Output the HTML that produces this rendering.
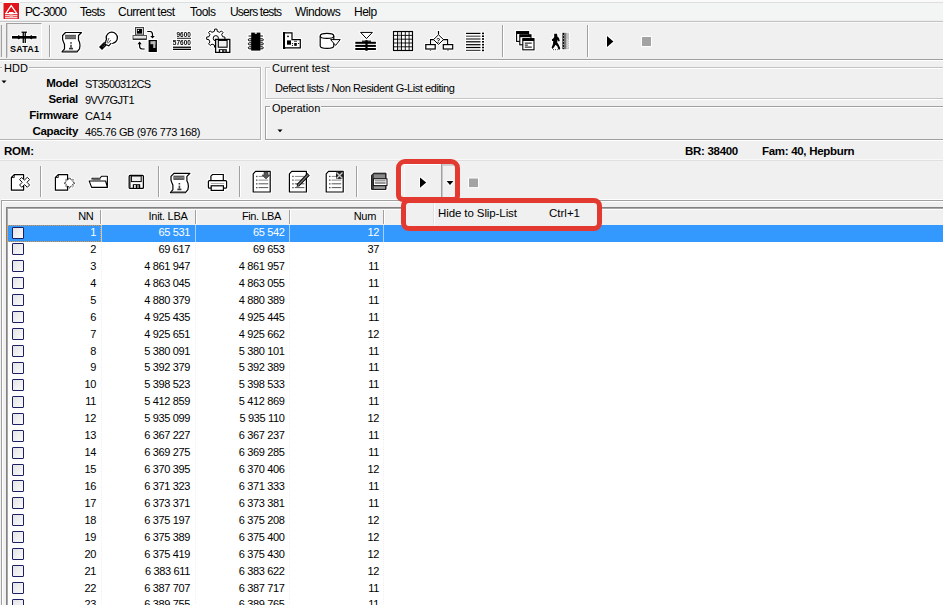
<!DOCTYPE html>
<html><head><meta charset="utf-8">
<style>
*{margin:0;padding:0;box-sizing:border-box}
html,body{width:943px;height:605px;overflow:hidden;background:#f0f0f0;font-family:"Liberation Sans",sans-serif;color:#000}
.a{position:absolute}
.t{position:absolute;white-space:nowrap;line-height:1}
.hl{position:absolute;height:1px}
.vl{position:absolute;width:1px}
.c{position:absolute;top:0;white-space:nowrap;letter-spacing:-0.35px}
.cb{position:absolute;left:12px;top:2.5px;width:12px;height:12px;border:1.5px solid #1b1f63;border-radius:1px;background:linear-gradient(135deg,#e4e4e4,#fafafa)}
</style></head><body>
<!-- menu bar -->
<div class="a" style="left:0;top:0;width:943px;height:21px;background:#f3f5f4"></div>
<div class="hl" style="left:0;top:0;width:943px;height:2px;background:#fafafa"></div>
<div class="hl" style="left:0;top:2px;width:943px;background:#dddfde"></div>
<div class="hl" style="left:0;top:20px;width:943px;background:#eceeee"></div>
<div class="hl" style="left:0;top:21px;width:943px;background:#c4c4c4"></div>
<div class="hl" style="left:0;top:22px;width:943px;background:#f8f8f8"></div>
<div id="menu">
<span class="t" style="left:25px;top:6px;font-size:12px;letter-spacing:-0.9px">PC-3000</span>
<span class="t" style="left:80px;top:6px;font-size:12px;letter-spacing:-0.7px">Tests</span>
<span class="t" style="left:118px;top:6px;font-size:12px;letter-spacing:-0.5px">Current test</span>
<span class="t" style="left:190px;top:6px;font-size:12px;letter-spacing:-0.5px">Tools</span>
<span class="t" style="left:230px;top:6px;font-size:12px;letter-spacing:-0.8px">Users tests</span>
<span class="t" style="left:295px;top:6px;font-size:12px;letter-spacing:-0.5px">Windows</span>
<span class="t" style="left:354px;top:6px;font-size:12px;letter-spacing:-0.5px">Help</span>
</div>
<!-- toolbar1 -->
<div class="vl" style="left:0;top:25px;height:32px;background:#e3e3e3"></div>
<div class="vl" style="left:1px;top:25px;height:32px;background:#a0a0a0"></div>
<div class="a" style="left:6px;top:23px;width:36px;height:35px;border-left:1px solid #a0a0a0;border-top:1px solid #a0a0a0;border-right:1px solid #fff;background:#f0f0f0"></div>
<div class="vl" style="left:7px;top:24px;height:33px;background:#d4d4d4"></div>
<div class="vl" style="left:49px;top:25px;height:32px;background:#a0a0a0"></div>
<div class="vl" style="left:50px;top:25px;height:32px;background:#fff"></div>
<div class="vl" style="left:502px;top:25px;height:32px;background:#a0a0a0"></div>
<div class="vl" style="left:503px;top:25px;height:32px;background:#fff"></div>
<div class="vl" style="left:587px;top:25px;height:32px;background:#a0a0a0"></div>
<div class="vl" style="left:588px;top:25px;height:32px;background:#fff"></div>
<span class="t" style="left:10px;top:45px;font-size:9px;font-weight:bold;letter-spacing:0.2px">SATA1</span>
<!-- toolbar 1 bottom -->
<div class="hl" style="left:0;top:59px;width:943px;background:#a0a0a0"></div>
<div class="hl" style="left:0;top:60px;width:943px;background:#ffffff"></div>

<!-- HDD group -->
<div class="a" style="left:0;top:67px;width:261px;height:1px;background:#b4b4b4"></div>
<div class="a" style="left:0;top:68px;width:260px;height:1px;background:#fff"></div>
<div class="a" style="left:260px;top:67px;width:1px;height:72px;background:#b4b4b4"></div>
<div class="a" style="left:261px;top:67px;width:1px;height:73px;background:#fff"></div>
<div class="a" style="left:0;top:139px;width:261px;height:1px;background:#b4b4b4"></div>
<div class="a" style="left:0;top:140px;width:262px;height:1px;background:#fff"></div>
<span class="t" style="left:2px;top:63px;font-size:11px;background:#f0f0f0;padding:0 1px 0 2px;height:10px">HDD</span>
<svg class="a" style="left:0;top:79px" width="8" height="6"><path d="M1.5,1.5 L6.5,1.5 L4,4.2Z" fill="#000"/></svg>
<div class="t" style="left:0;top:75px;width:78px;text-align:right;font-size:11.5px;font-weight:bold;letter-spacing:-0.3px;line-height:16px">
<div style="height:16px">Model</div><div style="height:16px">Serial</div><div style="height:16px">Firmware</div><div style="height:16px">Capacity</div></div>
<div class="t" style="left:85px;top:76px;font-size:11px;letter-spacing:-0.6px;line-height:16px">
<div style="height:16px">ST3500312CS</div><div style="height:16px">9VV7GJT1</div><div style="height:16px;letter-spacing:-0.3px">CA14</div><div style="height:16px;letter-spacing:-0.4px">465.76 GB (976 773 168)</div></div>

<div class="a" style="left:265px;top:67px;width:678px;height:1px;background:#c4c4c4"></div>
<div class="a" style="left:266px;top:68px;width:677px;height:1px;background:#fff"></div>
<div class="a" style="left:265px;top:67px;width:1px;height:32px;background:#c4c4c4"></div>
<div class="a" style="left:266px;top:68px;width:1px;height:31px;background:#fff"></div>
<div class="a" style="left:265px;top:98px;width:678px;height:1px;background:#c4c4c4"></div>
<div class="a" style="left:265px;top:99px;width:678px;height:1px;background:#fff"></div>
<span class="t" style="left:270px;top:63px;font-size:11px;background:#f0f0f0;padding:0 1px 0 2px;height:10px">Current test</span>
<span class="t" style="left:275px;top:83px;font-size:11px;letter-spacing:-0.43px">Defect lists / Non Resident G-List editing</span>

<div class="a" style="left:265px;top:106px;width:678px;height:1px;background:#a0a0a0"></div>
<div class="a" style="left:266px;top:107px;width:677px;height:1px;background:#fff"></div>
<div class="a" style="left:265px;top:106px;width:1px;height:33px;background:#a0a0a0"></div>
<div class="a" style="left:266px;top:107px;width:1px;height:32px;background:#fff"></div>
<div class="a" style="left:265px;top:139px;width:678px;height:1px;background:#a0a0a0"></div>
<div class="a" style="left:265px;top:140px;width:678px;height:1px;background:#fff"></div>
<span class="t" style="left:270px;top:103px;font-size:11px;background:#f0f0f0;padding:0 1px 0 2px;height:10px">Operation</span>
<svg class="a" style="left:276px;top:128px" width="8" height="6"><path d="M1.5,1.5 L6.5,1.5 L4,4.2Z" fill="#000"/></svg>

<span class="t" style="left:4px;top:146px;font-size:11.5px;font-weight:bold;letter-spacing:-0.2px">ROM:</span>
<span class="t" style="left:685px;top:146px;font-size:11.5px;font-weight:bold;letter-spacing:-0.3px">BR: 38400</span>
<span class="t" style="left:762px;top:146px;font-size:11.5px;font-weight:bold;letter-spacing:-0.3px">Fam: 40, Hepburn</span>
<!-- ROM row -->
<div class="hl" style="left:0;top:160px;width:943px;background:#dcdcdc"></div>

<!-- toolbar2 -->
<div class="hl" style="left:0;top:159px;width:943px;background:#f8f8f8"></div>
<div class="hl" style="left:0;top:160px;width:943px;background:#e0e0e0"></div>
<div class="vl" style="left:40px;top:166px;height:31px;background:#a0a0a0"></div>
<div class="vl" style="left:41px;top:166px;height:31px;background:#fff"></div>
<div class="vl" style="left:158px;top:166px;height:31px;background:#a0a0a0"></div>
<div class="vl" style="left:159px;top:166px;height:31px;background:#fff"></div>
<div class="vl" style="left:239px;top:166px;height:31px;background:#a0a0a0"></div>
<div class="vl" style="left:240px;top:166px;height:31px;background:#fff"></div>
<div class="vl" style="left:356px;top:166px;height:31px;background:#a0a0a0"></div>
<div class="vl" style="left:357px;top:166px;height:31px;background:#fff"></div>
<!-- dropdown button -->
<div class="a" style="left:401px;top:164px;width:54px;height:33px;background:#f0f0f0;border-left:1px solid #fff;border-top:1px solid #fff"></div>
<div class="vl" style="left:404px;top:165px;height:32px;background:#f8f8f8"></div>
<div class="vl" style="left:441px;top:164px;height:33px;background:#a0a0a0"></div>
<div class="vl" style="left:442px;top:164px;height:33px;background:#c8c8c8"></div>
<div class="a" style="left:443px;top:164px;width:12px;height:2px;background:#d0d0d0"></div>
<!-- grid -->
<div class="a" style="left:1px;top:199px;width:942px;height:1px;background:#fff"></div>
<div class="a" style="left:1px;top:200px;width:942px;height:1px;background:#a0a0a0"></div>
<div class="a" style="left:1px;top:200px;width:1px;height:405px;background:#a0a0a0"></div>
<div class="a" style="left:2px;top:201px;width:941px;height:1px;background:#fff"></div>
<div class="a" style="left:2px;top:201px;width:1px;height:404px;background:#fff"></div>
<div class="a" style="left:6px;top:207px;width:937px;height:398px;background:#fff"></div>
<div class="a" style="left:6px;top:207px;width:937px;height:1px;background:#828282"></div>
<div class="a" style="left:6px;top:207px;width:1px;height:398px;background:#828282"></div>
<div class="a" style="left:7px;top:208px;width:936px;height:1px;background:#a8a8a8"></div>
<div class="a" style="left:7px;top:208px;width:1px;height:397px;background:#a8a8a8"></div>
<div class="a" style="left:8px;top:209px;width:935px;height:16px;background:#f0f0f0;border-top:1px solid #fff"></div>
<div class="a" style="left:100px;top:210px;width:1px;height:14px;background:#a0a0a0"></div>
<div class="a" style="left:101px;top:210px;width:1px;height:14px;background:#fff"></div>
<div class="a" style="left:195px;top:210px;width:1px;height:14px;background:#a0a0a0"></div>
<div class="a" style="left:196px;top:210px;width:1px;height:14px;background:#fff"></div>
<div class="a" style="left:289px;top:210px;width:1px;height:14px;background:#a0a0a0"></div>
<div class="a" style="left:290px;top:210px;width:1px;height:14px;background:#fff"></div>
<div class="a" style="left:383px;top:210px;width:1px;height:14px;background:#a0a0a0"></div>
<div class="a" style="left:384px;top:210px;width:1px;height:14px;background:#fff"></div>
<span class="t" style="left:-26.5px;top:208px;width:120px;text-align:right;font-size:11px;line-height:17px;letter-spacing:-0.3px">NN</span>
<span class="t" style="left:67.5px;top:208px;width:120px;text-align:right;font-size:11px;line-height:17px;letter-spacing:-0.3px">Init. LBA</span>
<span class="t" style="left:161px;top:208px;width:120px;text-align:right;font-size:11px;line-height:17px;letter-spacing:-0.4px">Fin. LBA</span>
<span class="t" style="left:256px;top:208px;width:120px;text-align:right;font-size:11px;line-height:17px;letter-spacing:-0.3px">Num</span>
<div class="a" style="left:101px;top:241px;width:1px;height:364px;background:repeating-linear-gradient(#f0f0f0 0 1px,#fff 1px 2px)"></div>
<div class="a" style="left:195px;top:241px;width:1px;height:364px;background:repeating-linear-gradient(#f0f0f0 0 1px,#fff 1px 2px)"></div>
<div class="a" style="left:289px;top:241px;width:1px;height:364px;background:repeating-linear-gradient(#f0f0f0 0 1px,#fff 1px 2px)"></div>
<div class="a" style="left:383px;top:241px;width:1px;height:364px;background:repeating-linear-gradient(#f0f0f0 0 1px,#fff 1px 2px)"></div>
<div class="a" style="left:8px;top:225px;width:935px;height:17px;background:#3399ff"></div>
<div class="a" style="left:101px;top:225px;width:1px;height:17px;background:#a6d0fb"></div>
<div class="a" style="left:195px;top:225px;width:1px;height:17px;background:#a6d0fb"></div>
<div class="a" style="left:289px;top:225px;width:1px;height:17px;background:#a6d0fb"></div>
<div class="a" style="left:383px;top:225px;width:1px;height:17px;background:#a6d0fb"></div>
<div class="a" style="left:7px;top:225px;width:94px;height:17px;border:1px dotted #f0932d"></div>
<div class="a" style="left:0;top:224.00px;width:400px;height:17px;color:#fff;font-size:11px;line-height:17px"><div class="cb"></div><span class="c" style="right:304px">1</span><span class="c" style="right:210px">65 531</span><span class="c" style="right:115.5px">65 542</span><span class="c" style="right:21px">12</span></div>
<div class="a" style="left:0;top:240.93px;width:400px;height:17px;color:#000;font-size:11px;line-height:17px"><div class="cb"></div><span class="c" style="right:304px">2</span><span class="c" style="right:210px">69 617</span><span class="c" style="right:115.5px">69 653</span><span class="c" style="right:21px">37</span></div>
<div class="a" style="left:0;top:257.86px;width:400px;height:17px;color:#000;font-size:11px;line-height:17px"><div class="cb"></div><span class="c" style="right:304px">3</span><span class="c" style="right:210px">4 861 947</span><span class="c" style="right:115.5px">4 861 957</span><span class="c" style="right:21px">11</span></div>
<div class="a" style="left:0;top:274.79px;width:400px;height:17px;color:#000;font-size:11px;line-height:17px"><div class="cb"></div><span class="c" style="right:304px">4</span><span class="c" style="right:210px">4 863 045</span><span class="c" style="right:115.5px">4 863 055</span><span class="c" style="right:21px">11</span></div>
<div class="a" style="left:0;top:291.72px;width:400px;height:17px;color:#000;font-size:11px;line-height:17px"><div class="cb"></div><span class="c" style="right:304px">5</span><span class="c" style="right:210px">4 880 379</span><span class="c" style="right:115.5px">4 880 389</span><span class="c" style="right:21px">11</span></div>
<div class="a" style="left:0;top:308.65px;width:400px;height:17px;color:#000;font-size:11px;line-height:17px"><div class="cb"></div><span class="c" style="right:304px">6</span><span class="c" style="right:210px">4 925 435</span><span class="c" style="right:115.5px">4 925 445</span><span class="c" style="right:21px">11</span></div>
<div class="a" style="left:0;top:325.58px;width:400px;height:17px;color:#000;font-size:11px;line-height:17px"><div class="cb"></div><span class="c" style="right:304px">7</span><span class="c" style="right:210px">4 925 651</span><span class="c" style="right:115.5px">4 925 662</span><span class="c" style="right:21px">12</span></div>
<div class="a" style="left:0;top:342.51px;width:400px;height:17px;color:#000;font-size:11px;line-height:17px"><div class="cb"></div><span class="c" style="right:304px">8</span><span class="c" style="right:210px">5 380 091</span><span class="c" style="right:115.5px">5 380 101</span><span class="c" style="right:21px">11</span></div>
<div class="a" style="left:0;top:359.44px;width:400px;height:17px;color:#000;font-size:11px;line-height:17px"><div class="cb"></div><span class="c" style="right:304px">9</span><span class="c" style="right:210px">5 392 379</span><span class="c" style="right:115.5px">5 392 389</span><span class="c" style="right:21px">11</span></div>
<div class="a" style="left:0;top:376.37px;width:400px;height:17px;color:#000;font-size:11px;line-height:17px"><div class="cb"></div><span class="c" style="right:304px">10</span><span class="c" style="right:210px">5 398 523</span><span class="c" style="right:115.5px">5 398 533</span><span class="c" style="right:21px">11</span></div>
<div class="a" style="left:0;top:393.30px;width:400px;height:17px;color:#000;font-size:11px;line-height:17px"><div class="cb"></div><span class="c" style="right:304px">11</span><span class="c" style="right:210px">5 412 859</span><span class="c" style="right:115.5px">5 412 869</span><span class="c" style="right:21px">11</span></div>
<div class="a" style="left:0;top:410.23px;width:400px;height:17px;color:#000;font-size:11px;line-height:17px"><div class="cb"></div><span class="c" style="right:304px">12</span><span class="c" style="right:210px">5 935 099</span><span class="c" style="right:115.5px">5 935 110</span><span class="c" style="right:21px">12</span></div>
<div class="a" style="left:0;top:427.16px;width:400px;height:17px;color:#000;font-size:11px;line-height:17px"><div class="cb"></div><span class="c" style="right:304px">13</span><span class="c" style="right:210px">6 367 227</span><span class="c" style="right:115.5px">6 367 237</span><span class="c" style="right:21px">11</span></div>
<div class="a" style="left:0;top:444.09px;width:400px;height:17px;color:#000;font-size:11px;line-height:17px"><div class="cb"></div><span class="c" style="right:304px">14</span><span class="c" style="right:210px">6 369 275</span><span class="c" style="right:115.5px">6 369 285</span><span class="c" style="right:21px">11</span></div>
<div class="a" style="left:0;top:461.02px;width:400px;height:17px;color:#000;font-size:11px;line-height:17px"><div class="cb"></div><span class="c" style="right:304px">15</span><span class="c" style="right:210px">6 370 395</span><span class="c" style="right:115.5px">6 370 406</span><span class="c" style="right:21px">12</span></div>
<div class="a" style="left:0;top:477.95px;width:400px;height:17px;color:#000;font-size:11px;line-height:17px"><div class="cb"></div><span class="c" style="right:304px">16</span><span class="c" style="right:210px">6 371 323</span><span class="c" style="right:115.5px">6 371 333</span><span class="c" style="right:21px">11</span></div>
<div class="a" style="left:0;top:494.88px;width:400px;height:17px;color:#000;font-size:11px;line-height:17px"><div class="cb"></div><span class="c" style="right:304px">17</span><span class="c" style="right:210px">6 373 371</span><span class="c" style="right:115.5px">6 373 381</span><span class="c" style="right:21px">11</span></div>
<div class="a" style="left:0;top:511.81px;width:400px;height:17px;color:#000;font-size:11px;line-height:17px"><div class="cb"></div><span class="c" style="right:304px">18</span><span class="c" style="right:210px">6 375 197</span><span class="c" style="right:115.5px">6 375 208</span><span class="c" style="right:21px">12</span></div>
<div class="a" style="left:0;top:528.74px;width:400px;height:17px;color:#000;font-size:11px;line-height:17px"><div class="cb"></div><span class="c" style="right:304px">19</span><span class="c" style="right:210px">6 375 389</span><span class="c" style="right:115.5px">6 375 400</span><span class="c" style="right:21px">12</span></div>
<div class="a" style="left:0;top:545.67px;width:400px;height:17px;color:#000;font-size:11px;line-height:17px"><div class="cb"></div><span class="c" style="right:304px">20</span><span class="c" style="right:210px">6 375 419</span><span class="c" style="right:115.5px">6 375 430</span><span class="c" style="right:21px">12</span></div>
<div class="a" style="left:0;top:562.60px;width:400px;height:17px;color:#000;font-size:11px;line-height:17px"><div class="cb"></div><span class="c" style="right:304px">21</span><span class="c" style="right:210px">6 383 611</span><span class="c" style="right:115.5px">6 383 622</span><span class="c" style="right:21px">12</span></div>
<div class="a" style="left:0;top:579.53px;width:400px;height:17px;color:#000;font-size:11px;line-height:17px"><div class="cb"></div><span class="c" style="right:304px">22</span><span class="c" style="right:210px">6 387 707</span><span class="c" style="right:115.5px">6 387 717</span><span class="c" style="right:21px">11</span></div>
<div class="a" style="left:0;top:596.46px;width:400px;height:17px;color:#000;font-size:11px;line-height:17px"><div class="cb"></div><span class="c" style="right:304px">23</span><span class="c" style="right:210px">6 389 755</span><span class="c" style="right:115.5px">6 389 765</span><span class="c" style="right:21px">11</span></div>
<svg class="a" style="left:0;top:0" width="943" height="605"><defs><filter id="halo" x="-5%" y="-5%" width="110%" height="110%" color-interpolation-filters="sRGB">
<feMorphology in="SourceAlpha" operator="dilate" radius="1" result="d"/>
<feFlood flood-color="#ffffff" flood-opacity="0.9"/>
<feComposite in2="d" operator="in" result="w"/>
<feGaussianBlur in="w" stdDeviation="0.35" result="wb"/>
<feMerge><feMergeNode in="wb"/><feMergeNode in="SourceGraphic"/></feMerge>
</filter></defs><g filter="url(#halo)">
<!-- logo -->
<rect x="3.5" y="3" width="15.5" height="16" fill="#e2141b"/>
<path d="M6,13.2 L11.2,5.6 L16.6,13.2" fill="none" stroke="#fff" stroke-width="1.3"/>
<rect x="5" y="13" width="12.5" height="1.2" fill="#fff"/>
<rect x="9" y="12" width="4.5" height="1.2" fill="#fff"/>
<rect x="5" y="15.2" width="12.5" height="1.1" fill="#fff"/>
<rect x="5" y="17.2" width="12.5" height="1.1" fill="#fff"/>
<rect x="9.5" y="14.4" width="3.5" height="3" fill="#f6b0b0"/>
<!-- SATA -->
<rect x="12" y="36" width="24.5" height="2.6" fill="#000"/>
<path d="M16.5,37.3 L18.8,35 L21,37.3 L18.8,39.6Z M29,37.3 L31.2,35 L33.5,37.3 L31.2,39.6Z" fill="#000"/>
<rect x="22.6" y="32" width="1.3" height="11" fill="#000"/>
<rect x="24.6" y="32" width="1.3" height="11" fill="#000"/>
<rect x="21.5" y="31.6" width="5.5" height="1.2" fill="#000"/>
<!-- scroll -->
<g id="scroll">
<path d="M65.5,32.5 L81.5,32.5 L78.5,35.5 L78.5,40 L79.6,42.5 L80,45.5 L79.5,48.8 L77,51.8 L62,51.8 L64.5,48.8 L64.5,44.5 L63.5,42 L62.6,39.5 L62.6,35.5 Z" fill="#fff" stroke="#000" stroke-width="1.2" stroke-linejoin="round"/>
<rect x="65" y="34.8" width="11" height="4.4" fill="#5a5a5a"/>
<rect x="65" y="36.5" width="11" height="1" fill="#8a8a8a"/>
<rect x="70.2" y="42.2" width="1.6" height="1.5" fill="#333"/>
<rect x="70.2" y="44.8" width="1.6" height="3" fill="#444"/>
<rect x="69" y="47.8" width="4" height="1.6" fill="#333"/>
<rect x="63" y="50.6" width="14" height="1.4" fill="#444"/>
</g>
<!-- bulb -->
<circle cx="111.8" cy="37.8" r="5.6" fill="#fff" stroke="#000" stroke-width="1.3"/>
<path d="M106.2,40.5 L104.5,43 M110.5,43.8 L108,45" stroke="#000" stroke-width="1.2"/>
<rect x="106" y="39" width="6" height="6" fill="#fff" transform="rotate(45 109 42)"/>
<path d="M106.8,38.2 L105,44.2 L108.8,45.8 L111.2,43.2" fill="#fff" stroke="#000" stroke-width="1.1"/>
<path d="M109,38 L107,43 M110.8,40 L108,43.5" stroke="#444" stroke-width="0.9"/>
<path d="M100.5,48.5 L105.2,43.8" stroke="#000" stroke-width="4.2"/>
<path d="M102.2,45.5 L104.2,47.5 M103.6,44.3 L105.5,46.2" stroke="#777" stroke-width="0.7"/>
<!-- transfer -->
<rect x="135.5" y="27.5" width="8" height="7.5" fill="#ccc" stroke="#444" stroke-width="1"/>
<rect x="137" y="29" width="5" height="4.6" fill="#000"/>
<rect x="137.8" y="29.8" width="1.2" height="1.2" fill="#fff"/>
<rect x="133" y="35.5" width="13.5" height="3.8" fill="#e4e4e4" stroke="#555" stroke-width="1"/>
<rect x="133" y="38.6" width="13.5" height="1.2" fill="#222"/>
<path d="M147.2,31.5 L150.3,31.5 Q152.5,31.8 152.5,34.5 L152.5,36.5" fill="none" stroke="#000" stroke-width="1.2"/>
<path d="M150.2,36 L154.8,36 L152.5,38.6Z" fill="#000"/>
<rect x="148.6" y="40" width="8.3" height="12" fill="#000"/>
<rect x="150.4" y="41.2" width="5" height="3" fill="#b8b8b8"/>
<rect x="153.2" y="41.2" width="2.2" height="6.8" fill="#b8b8b8"/>
<path d="M144.6,49 L142,49 Q139.6,48.6 139.6,46 L139.6,43.6" fill="none" stroke="#000" stroke-width="1.2"/>
<path d="M137.4,44.2 L141.8,44.2 L139.6,41.6Z" fill="#000"/>
<!-- 9600 -->
<text x="176.5" y="36.8" font-family="Liberation Sans" font-weight="bold" font-size="6.6" textLength="14.3" lengthAdjust="spacingAndGlyphs">9600</text>
<rect x="177" y="37.8" width="14" height="1" fill="#222"/>
<text x="172.8" y="44.9" font-family="Liberation Sans" font-weight="bold" font-size="6.6" textLength="18.1" lengthAdjust="spacingAndGlyphs">57600</text>
<rect x="173" y="46.6" width="18" height="1.3" fill="#000"/>
<rect x="173" y="48.7" width="18" height="1.3" fill="#000"/>
<!-- gear floppy -->
<path d="M222.64,36.73 L224.93,37.06 L224.93,39.34 L222.64,39.67 L221.68,42.00 L223.06,43.85 L221.45,45.46 L219.60,44.08 L217.27,45.04 L216.94,47.33 L214.66,47.33 L214.33,45.04 L212.00,44.08 L210.15,45.46 L208.54,43.85 L209.92,42.00 L208.96,39.67 L206.67,39.34 L206.67,37.06 L208.96,36.73 L209.92,34.40 L208.54,32.55 L210.15,30.94 L212.00,32.32 L214.33,31.36 L214.66,29.07 L216.94,29.07 L217.27,31.36 L219.60,32.32 L221.45,30.94 L223.06,32.55 L221.68,34.40 Z" fill="#fff" stroke="#000" stroke-width="1"/>
<circle cx="215.8" cy="38.2" r="2.6" fill="#fff" stroke="#000" stroke-width="1"/>
<rect x="215.6" y="39.4" width="14.2" height="13" fill="#fff" stroke="#000" stroke-width="1.3"/>
<rect x="218.3" y="40.4" width="8.8" height="6.8" fill="#eee" stroke="#000" stroke-width="1.1"/>
<rect x="218.8" y="49.2" width="8" height="3.2" fill="#000"/>
<rect x="220.2" y="50" width="2" height="2" fill="#eee"/>
<rect x="223.6" y="50" width="2" height="2" fill="#888"/>
<!-- chip -->
<g fill="#fff" stroke="#000" stroke-width="1">
<rect x="248.3" y="38.8" width="4" height="2" rx="1"/><rect x="248.3" y="42.8" width="4" height="2" rx="1"/><rect x="248.3" y="46.8" width="4" height="2" rx="1"/>
<rect x="259.3" y="38.8" width="4" height="2" rx="1"/><rect x="259.3" y="42.8" width="4" height="2" rx="1"/><rect x="259.3" y="46.8" width="4" height="2" rx="1"/>
</g>
<rect x="248.5" y="35" width="3" height="2" fill="#888"/><rect x="260" y="35" width="3" height="2" fill="#888"/>
<rect x="251.2" y="32.6" width="9.2" height="18" fill="#000"/>
<rect x="254.8" y="32.2" width="2" height="1.6" fill="#f0f0f0"/>
<!-- board -->
<rect x="283" y="32" width="2.2" height="17" fill="#000"/>
<path d="M285,32.8 L292,32.8 L292,39.6 L300.3,39.6 L300.3,47.8 L285,47.8" fill="#fff" stroke="#000" stroke-width="1.2"/>
<rect x="287" y="40.4" width="4" height="4.3" fill="#000"/>
<rect x="294.2" y="43" width="2.6" height="2.8" fill="#000"/>
<rect x="294" y="40.8" width="3" height="0.9" fill="#333"/>
<circle cx="288" cy="36.3" r="0.9" fill="#000"/>
<circle cx="292.5" cy="43.5" r="0.6" fill="#000"/><circle cx="292.5" cy="45.3" r="0.6" fill="#000"/><circle cx="298.5" cy="43.5" r="0.6" fill="#000"/>
<!-- cylinder -->
<path d="M320.2,36 Q320.2,33.4 327,33.4 Q333.8,33.4 333.8,36 L333.8,46 Q333.8,48.4 327,48.4 Q320.2,48.4 320.2,46 Z" fill="#fff" stroke="#000" stroke-width="1.2"/>
<path d="M320.2,36 Q320.2,38.4 327,38.4 Q333.8,38.4 333.8,36" fill="none" stroke="#000" stroke-width="1.1"/>
<path d="M330.6,39.6 L340.2,39.6 L335.6,45.4 Z" fill="#fff" stroke="#000" stroke-width="1"/>
<!-- funnel -->
<path d="M360.6,32.4 L372.4,32.4 L366.5,38.6 Z" fill="#fff" stroke="#000" stroke-width="1"/>
<rect x="355.3" y="41.8" width="20.6" height="2" fill="#000"/>
<rect x="355.3" y="44.9" width="20.6" height="2" fill="#000"/>
<rect x="355.3" y="48" width="20.6" height="2" fill="#000"/>
<rect x="365.4" y="40.2" width="2.2" height="10.6" fill="#000"/>
<rect x="362" y="40.6" width="9" height="1.2" fill="#000"/>
<!-- grid -->
<rect x="393.5" y="31.5" width="19" height="19" fill="#fff" stroke="#000" stroke-width="1.2"/>
<path d="M397.5,31.5 V50.5 M401.5,31.5 V50.5 M405.3,31.5 V50.5 M409.1,31.5 V50.5 M393.5,35.4 H412.5 M393.5,39.2 H412.5 M393.5,43 H412.5 M393.5,46.8 H412.5" stroke="#000" stroke-width="0.9"/>
<rect x="398" y="32" width="3" height="18" fill="#999" opacity="0.35"/>
<!-- flowchart -->
<path d="M438.5,31 L438.5,34.5" stroke="#000" stroke-width="1.2"/>
<path d="M438.5,34.8 L443.5,39.6 L438.5,44.4 L433.5,39.6 Z" fill="#fff" stroke="#000" stroke-width="1"/>
<text x="436.2" y="42.5" font-family="Liberation Sans" font-weight="bold" font-size="6.5">?</text>
<path d="M433.8,39.6 L430.5,39.6 L430.5,44.5 M443.2,39.6 L447.6,39.6 L447.6,44.5" fill="none" stroke="#000" stroke-width="1.1"/>
<rect x="425.8" y="44.6" width="9.4" height="4.4" fill="#fff" stroke="#000" stroke-width="1.2"/>
<rect x="443.3" y="44.6" width="9.4" height="4.4" fill="#fff" stroke="#000" stroke-width="1.2"/>
<rect x="429.8" y="49" width="1.3" height="1.8" fill="#555"/><rect x="447.3" y="49" width="1.3" height="1.8" fill="#555"/>
<!-- lines -->
<g fill="#000">
<rect x="466" y="32.8" width="14.5" height="1.2"/><rect x="466" y="35.6" width="14.5" height="1.2" fill="#555"/><rect x="466" y="38.4" width="14.5" height="1.2" fill="#333"/><rect x="466" y="41.2" width="14.5" height="1.2"/><rect x="466" y="44.1" width="14.5" height="1.2"/><rect x="466" y="46.9" width="14.5" height="1.2"/><rect x="466" y="49.8" width="14.5" height="1.2" fill="#444"/>
<rect x="482" y="32.6" width="2" height="1.6"/><rect x="482" y="35.4" width="2" height="1.6"/><rect x="482" y="38.2" width="2" height="1.6"/><rect x="482" y="41" width="2" height="1.6"/><rect x="482" y="43.9" width="2" height="1.6"/><rect x="482" y="46.7" width="2" height="1.6"/><rect x="482" y="49.6" width="2" height="1.6"/>
</g>
<!-- windows -->
<rect x="516.6" y="31.6" width="12" height="9.8" fill="#fff" stroke="#000" stroke-width="1.1"/>
<rect x="516.6" y="31.6" width="12" height="2.4" fill="#000"/>
<rect x="519.8" y="34.8" width="11.2" height="10" fill="#fff" stroke="#000" stroke-width="1.1"/>
<rect x="519.8" y="34.8" width="11.2" height="2.4" fill="#000"/>
<rect x="522.8" y="38.6" width="11.2" height="11.2" fill="#fff" stroke="#000" stroke-width="1.1"/>
<rect x="522.8" y="38.6" width="11.2" height="2.4" fill="#000"/>
<rect x="524.8" y="42.6" width="7" height="1" fill="#000"/><rect x="524.8" y="44.6" width="3" height="1" fill="#000"/><rect x="524.8" y="46.6" width="7" height="1" fill="#000"/>
<!-- walker -->
<path d="M554.2,33.8 L557,33.8 L557.4,36.4 L559,38 L559.8,41 L558.6,41.4 L557.6,39.8 L557.2,42.6 L558.6,44.6 L560.2,48 L560,49.6 L558.4,49.6 L557.4,46.6 L555.6,44.8 L554,47.2 L552.4,49 L551.6,47.6 L553,44 L553.2,41 L552.2,41 L551.8,39.6 L553.2,38.4 L554.2,37 Z" fill="#000"/>
<rect x="553" y="49.2" width="1" height="1" fill="#333"/><rect x="555" y="49.2" width="1" height="1" fill="#333"/><rect x="557" y="49.2" width="1" height="1" fill="#555"/>
<rect x="562.4" y="32.8" width="2.2" height="16.4" fill="#111"/>
<rect x="564.6" y="32.8" width="2" height="16.4" fill="#7a7a7a"/>
<rect x="566.6" y="32.8" width="2.4" height="16.4" fill="#c4c4c4"/>
<g fill="#fff" opacity="0.6"><rect x="563" y="35" width="1" height="1"/><rect x="563" y="38" width="1" height="1"/><rect x="563" y="41" width="1" height="1"/><rect x="563" y="44" width="1" height="1"/><rect x="563" y="47" width="1" height="1"/>
<rect x="566.8" y="39" width="1" height="1"/><rect x="567.8" y="40" width="1" height="1"/><rect x="566.8" y="41" width="1" height="1"/><rect x="567.8" y="42" width="1" height="1"/><rect x="566.8" y="43" width="1" height="1"/><rect x="567.8" y="44" width="1" height="1"/><rect x="566.8" y="45" width="1" height="1"/><rect x="567.8" y="46" width="1" height="1"/><rect x="566.8" y="47" width="1" height="1"/></g>
<!-- play/stop -->
<path d="M607,36 L613.4,41.5 L607,47 Z" fill="#000"/>
<rect x="642" y="37" width="9" height="9" fill="#a3a3a3"/>
</g></svg>

<svg class="a" style="left:0;top:0" width="943" height="605"><g filter="url(#halo)">
<!-- doc X -->
<path d="M14.3,174.6 L23.6,174.6 L23.6,190.2 L11.4,190.2 L11.4,177.5 Z" fill="#fff" stroke="#000" stroke-width="1.2" stroke-linejoin="round"/>
<path d="M11.4,177.5 L14.3,177.5 L14.3,174.6" fill="none" stroke="#000" stroke-width="0.8"/>
<path d="M21.5,177.5 L24.5,180 L27.3,177.3 L29.6,179.6 L27,182.3 L29.6,185 L27.3,187.3 L24.5,184.6 L21.8,187.3 L19.6,185 L22.2,182.3 L19.6,179.6 Z" fill="#fff" stroke="#111" stroke-width="1"/>
<!-- doc gear -->
<path d="M58.3,174.6 L67.6,174.6 L67.6,190.2 L55.4,190.2 L55.4,177.5 Z" fill="#fff" stroke="#000" stroke-width="1.2" stroke-linejoin="round"/>
<path d="M55.4,177.5 L58.3,177.5 L58.3,174.6" fill="none" stroke="#000" stroke-width="0.8"/>
<path d="M73.12,182.22 L74.46,182.38 L74.46,183.62 L73.12,183.78 L72.61,185.01 L73.44,186.07 L72.57,186.94 L71.51,186.11 L70.28,186.62 L70.12,187.96 L68.88,187.96 L68.72,186.62 L67.49,186.11 L66.43,186.94 L65.56,186.07 L66.39,185.01 L65.88,183.78 L64.54,183.62 L64.54,182.38 L65.88,182.22 L66.39,180.99 L65.56,179.93 L66.43,179.06 L67.49,179.89 L68.72,179.38 L68.88,178.04 L70.12,178.04 L70.28,179.38 L71.51,179.89 L72.57,179.06 L73.44,179.93 L72.61,180.99 Z" fill="#fff" stroke="#111" stroke-width="0.9" stroke-dasharray="1.4 0.6"/>
<!-- folder -->
<path d="M92,179.5 L92,178.3 L100,178.3 L101.5,176.2 L107.4,176.2 L107.4,187.4 L91.6,187.4 L89.2,181 L105.6,181 L107.4,187.4" fill="#fff" stroke="#000" stroke-width="1.1" stroke-linejoin="round"/>
<rect x="92.5" y="178.6" width="8" height="1.8" fill="#666"/>
<!-- floppy -->
<rect x="129.2" y="175.4" width="14.2" height="13" rx="1" fill="#fff" stroke="#000" stroke-width="1.3"/>
<rect x="131.4" y="176" width="9.8" height="5.6" fill="#eee" stroke="#000" stroke-width="1"/>
<rect x="132.8" y="184.2" width="7.4" height="4" fill="#000"/>
<rect x="134" y="185" width="1.8" height="3" fill="#ddd"/><rect x="137.2" y="185" width="1.6" height="3" fill="#999"/>
<rect x="129.8" y="176" width="1" height="12" fill="#666"/>
<!-- scroll 2 -->
<g transform="translate(108.4,140.8)">
<path d="M65.5,32.5 L81.5,32.5 L78.5,35.5 L78.5,40 L79.6,42.5 L80,45.5 L79.5,48.8 L77,51.8 L62,51.8 L64.5,48.8 L64.5,44.5 L63.5,42 L62.6,39.5 L62.6,35.5 Z" fill="#fff" stroke="#000" stroke-width="1.2" stroke-linejoin="round"/>
<rect x="65" y="34.8" width="11" height="4.4" fill="#5a5a5a"/>
<rect x="65" y="36.5" width="11" height="1" fill="#8a8a8a"/>
<rect x="70.2" y="42.2" width="1.6" height="1.5" fill="#333"/>
<rect x="70.2" y="44.8" width="1.6" height="3" fill="#444"/>
<rect x="69" y="47.8" width="4" height="1.6" fill="#333"/>
<rect x="63" y="50.6" width="14" height="1.4" fill="#444"/>
</g>
<!-- printer -->
<path d="M212.5,174.5 L223.3,174.5 L223.3,180.6 L210.9,180.6 L210.9,176.2 Z" fill="#fff" stroke="#000" stroke-width="1.2"/>
<rect x="208.4" y="180.6" width="18.2" height="7.6" rx="1" fill="#fff" stroke="#000" stroke-width="1.2"/>
<rect x="210.8" y="183" width="13.4" height="1" fill="#aaa"/>
<rect x="211.2" y="185.8" width="12.2" height="4.6" fill="#fff" stroke="#000" stroke-width="1.2"/>
<!-- doc lists -->
<g id="dl1">
<path d="M255.5,171.4 L270.2,171.4 L270.2,192 L253.2,192 L253.2,173.8 Z" fill="#fff" stroke="#000" stroke-width="1.2" stroke-linejoin="round"/>
<rect x="256" y="175.8" width="1.5" height="1.3" fill="#555"/><rect x="256" y="179.5" width="1.5" height="1.3" fill="#555"/><rect x="256" y="183.2" width="1.5" height="1.3" fill="#555"/><rect x="256" y="187" width="1.5" height="1.3" fill="#555"/>
<rect x="258.6" y="175.9" width="9.6" height="1" fill="#888"/><rect x="258.6" y="179.6" width="9.6" height="1" fill="#888"/><rect x="258.6" y="183.3" width="9.6" height="1" fill="#555"/><rect x="258.6" y="187.1" width="9.6" height="1" fill="#555"/>
</g>
<path d="M264,172 L268,172 L268,175 L270,175 L266,179 L262,175 L264,175Z" fill="#555" stroke="#333" stroke-width="0.6"/>
<g transform="translate(36.2,0)">
<path d="M255.5,171.4 L270.2,171.4 L270.2,192 L253.2,192 L253.2,173.8 Z" fill="#fff" stroke="#000" stroke-width="1.2" stroke-linejoin="round"/>
<rect x="256" y="175.8" width="1.5" height="1.3" fill="#555"/><rect x="256" y="179.5" width="1.5" height="1.3" fill="#555"/><rect x="256" y="183.2" width="1.5" height="1.3" fill="#555"/><rect x="256" y="187" width="1.5" height="1.3" fill="#555"/>
<rect x="258.6" y="175.9" width="9.6" height="1" fill="#888"/><rect x="258.6" y="179.6" width="9.6" height="1" fill="#888"/><rect x="258.6" y="183.3" width="9.6" height="1" fill="#555"/><rect x="258.6" y="187.1" width="9.6" height="1" fill="#555"/>
</g>
<path d="M297.6,185.6 L308.6,174.2" stroke="#000" stroke-width="3.4"/>
<path d="M297.8,185.4 L308.4,174.4" stroke="#777" stroke-width="1.4"/>
<path d="M296.4,187 L297.2,185 L298.4,186.2 Z" fill="#000"/>
<g transform="translate(73,0)">
<path d="M255.5,171.4 L270.2,171.4 L270.2,192 L253.2,192 L253.2,173.8 Z" fill="#fff" stroke="#000" stroke-width="1.2" stroke-linejoin="round"/>
<rect x="256" y="175.8" width="1.5" height="1.3" fill="#555"/><rect x="256" y="179.5" width="1.5" height="1.3" fill="#555"/><rect x="256" y="183.2" width="1.5" height="1.3" fill="#555"/><rect x="256" y="187" width="1.5" height="1.3" fill="#555"/>
<rect x="258.6" y="175.9" width="9.6" height="1" fill="#888"/><rect x="258.6" y="179.6" width="9.6" height="1" fill="#888"/><rect x="258.6" y="183.3" width="9.6" height="1" fill="#555"/><rect x="258.6" y="187.1" width="9.6" height="1" fill="#555"/>
</g>
<rect x="336" y="171.5" width="7.4" height="7.4" fill="#222"/>
<path d="M336.5,172.5 L342.5,178.5 M342.5,172.5 L336.5,178.5" stroke="#ccc" stroke-width="1.3"/>
<!-- keyboard/device -->
<path d="M373.6,173.2 L386,173.2 L386,189.4 L371.6,189.4 L371.6,175.2 Z" fill="#444" stroke="#111" stroke-width="1"/>
<rect x="374" y="174.4" width="11" height="3.6" fill="#8a8a8a"/>
<rect x="373.4" y="178.8" width="13.6" height="6.8" fill="#fff" stroke="#111" stroke-width="1"/>
<rect x="374.8" y="180.2" width="10.8" height="1.2" fill="#888"/><rect x="374.8" y="182.4" width="10.8" height="1.2" fill="#555"/>
<rect x="374" y="186.4" width="11" height="2.4" fill="#9a9a9a"/>
<!-- play, dropdown, stop -->
<path d="M420,177.5 L426.2,182.6 L420,187.8 Z" fill="#000"/>
<path d="M446.6,181 L453.4,181 L450,185 Z" fill="#000"/>
<rect x="469" y="178.5" width="9" height="8.6" fill="#a3a3a3"/>
</g></svg>

<!-- popup menu -->
<div class="a" style="left:404px;top:201px;width:194px;height:26px;background:#f0f0f0;border:1px solid #fff"></div>
<div class="vl" style="left:433px;top:203px;height:22px;background:#e0e0e0"></div>
<div class="vl" style="left:434px;top:203px;height:22px;background:#fff"></div>
<span class="t" style="left:438px;top:208px;font-size:11.5px;letter-spacing:-0.1px">Hide to Slip-List</span>
<span class="t" style="left:549px;top:208px;font-size:11.5px;letter-spacing:0px">Ctrl+1</span>
<!-- red boxes -->
<div class="a" style="left:396px;top:159px;width:64px;height:43px;border:5px solid #e23a31;border-radius:9px 9px 6px 7px"></div>
<div class="a" style="left:401px;top:197.5px;width:200.5px;height:33.2px;border:5px solid #e23a31;border-radius:8px"></div>

</body></html>
